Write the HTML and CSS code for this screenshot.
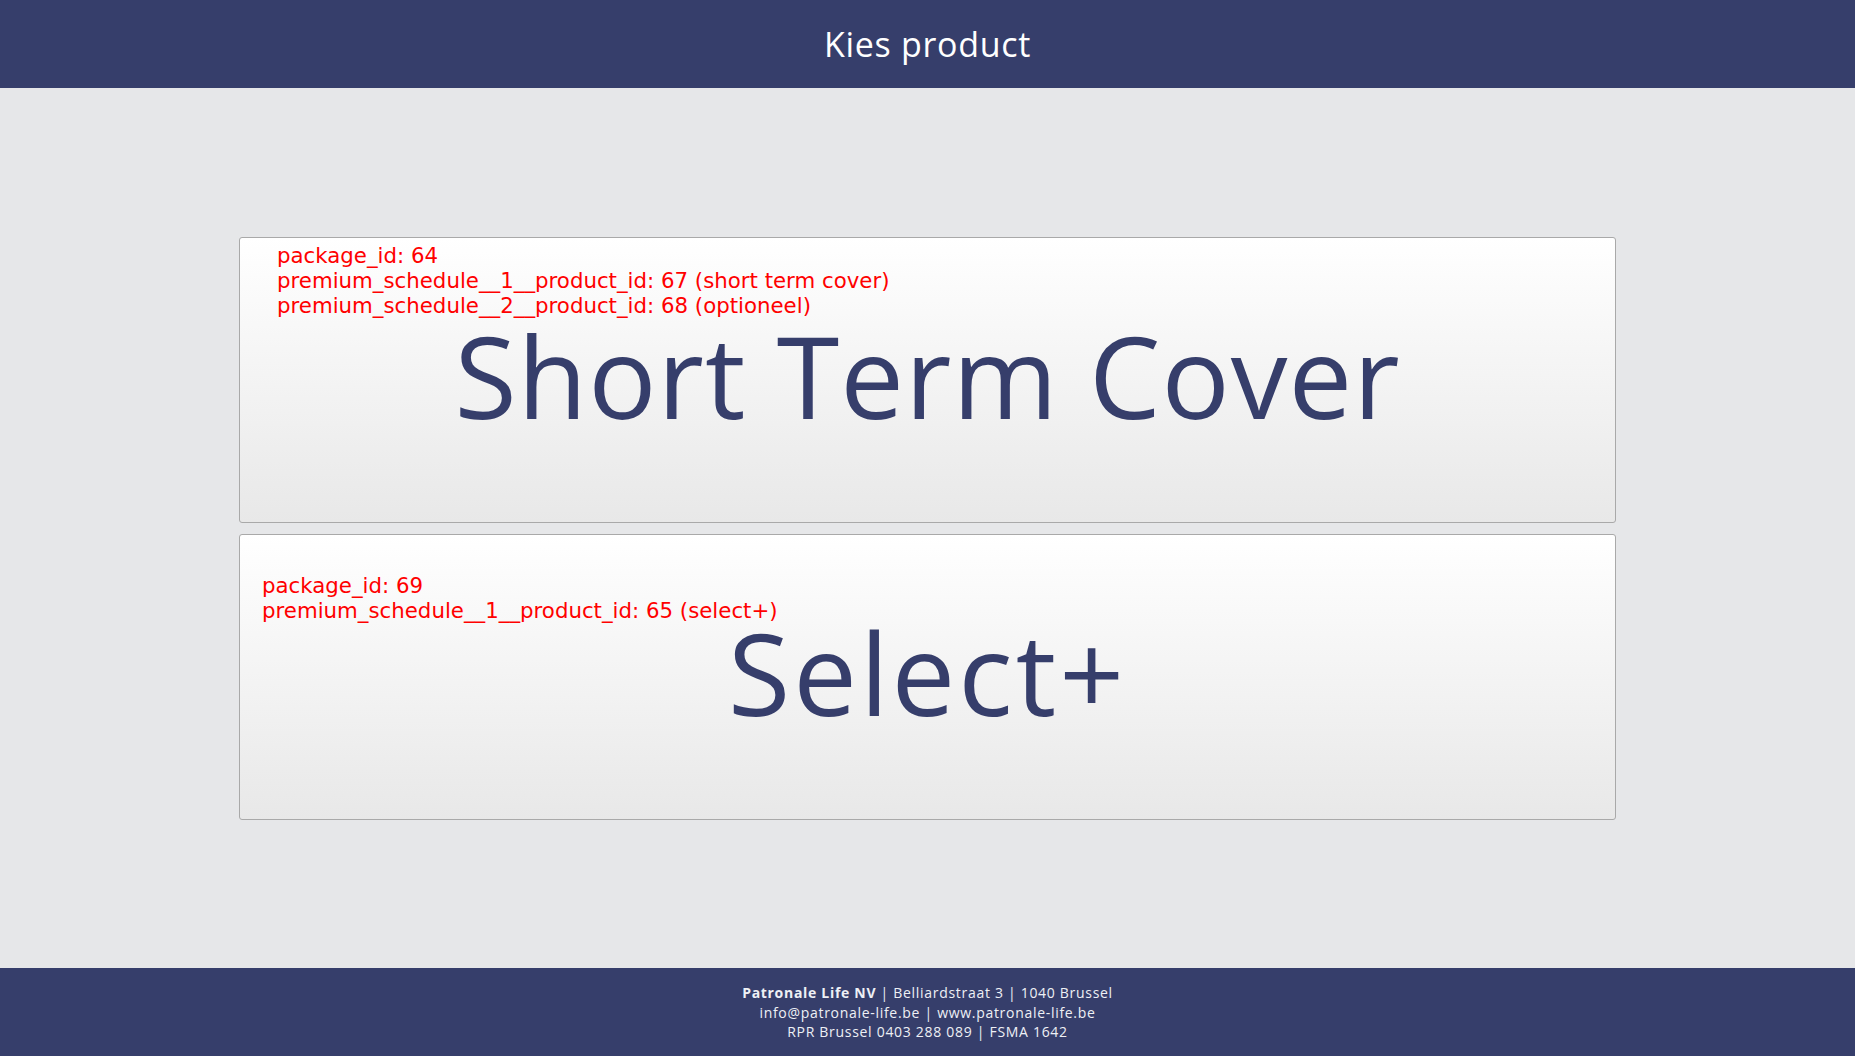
FILE: index.html
```html
<!DOCTYPE html>
<html lang="nl">
<head>
<meta charset="utf-8">
<title>Kies product</title>
<link rel="stylesheet" href="styles.css">
</head>
<body>
<header class="topbar">
  <h1 class="topbar-title">Kies product</h1>
</header>
<main class="content">
  <div class="products">
    <a class="card card--one" href="#">
      <div class="info">
        <div>package_id: 64</div>
        <div>premium_schedule__1__product_id: 67 (short term cover)</div>
        <div>premium_schedule__2__product_id: 68 (optioneel)</div>
      </div>
      <div class="title">Short Term Cover</div>
    </a>
    <a class="card card--two" href="#">
      <div class="info">
        <div>package_id: 69</div>
        <div>premium_schedule__1__product_id: 65 (select+)</div>
      </div>
      <div class="title">Select+</div>
    </a>
  </div>
</main>
<footer class="footer">
  <div><strong>Patronale Life NV</strong> | Belliardstraat 3 | 1040 Brussel</div>
  <div>info@patronale-life.be | www.patronale-life.be</div>
  <div>RPR Brussel 0403 288 089 | FSMA 1642</div>
</footer>
</body>
</html>
```
FILE: styles.css
```css
html, body {
  margin: 0;
  padding: 0;
  height: 100%;
}
body {
  display: flex;
  flex-direction: column;
  min-height: 100vh;
  background: #e6e7e9;
  font-family: "Open Sans", "DejaVu Sans", sans-serif;
}
.topbar {
  height: 88px;
  background: #363e6b;
  display: flex;
  align-items: center;
  justify-content: center;
  flex-shrink: 0;
}
.topbar-title {
  margin: 0;
  color: #ffffff;
  font-weight: 400;
  font-size: 34px;
  letter-spacing: 0.7px;
  line-height: 1;
}
.content {
  flex: 1;
  display: flex;
  align-items: center;
  justify-content: center;
}
.products {
  width: 1377px;
  display: flex;
  flex-direction: column;
  gap: 11px;
}
.card {
  display: flex;
  flex-direction: column;
  box-sizing: border-box;
  height: 286px;
  border: 1px solid #a9a9a9;
  border-radius: 3px;
  background: linear-gradient(to bottom, #ffffff 0%, #e8e8e8 100%);
  text-decoration: none;
}
.info {
  font-family: "DejaVu Sans", sans-serif;
  font-size: 21.3px;
  color: #ff0000;
  line-height: normal;
}
.card--one .info {
  padding: 5px 0 0 37px;
}
.card--two .info {
  padding: 38px 0 0 22px;
}
.title {
  font-family: "Open Sans", "DejaVu Sans", sans-serif;
  font-size: 113.5px;
  line-height: 1;
  color: #363e6b;
  text-align: center;
}
.card--one .title {
  margin-top: 1px;
  letter-spacing: 1px;
}
.card--two .title {
  margin-top: -7px;
  letter-spacing: 3px;
}
.footer {
  height: 88px;
  flex-shrink: 0;
  box-sizing: border-box;
  padding-top: 15px;
  background: #363e6b;
  color: #eef0f5;
  text-align: center;
  font-size: 14px;
  line-height: 19.5px;
  letter-spacing: 0.7px;
}
.footer strong {
  font-weight: 700;
}
```
